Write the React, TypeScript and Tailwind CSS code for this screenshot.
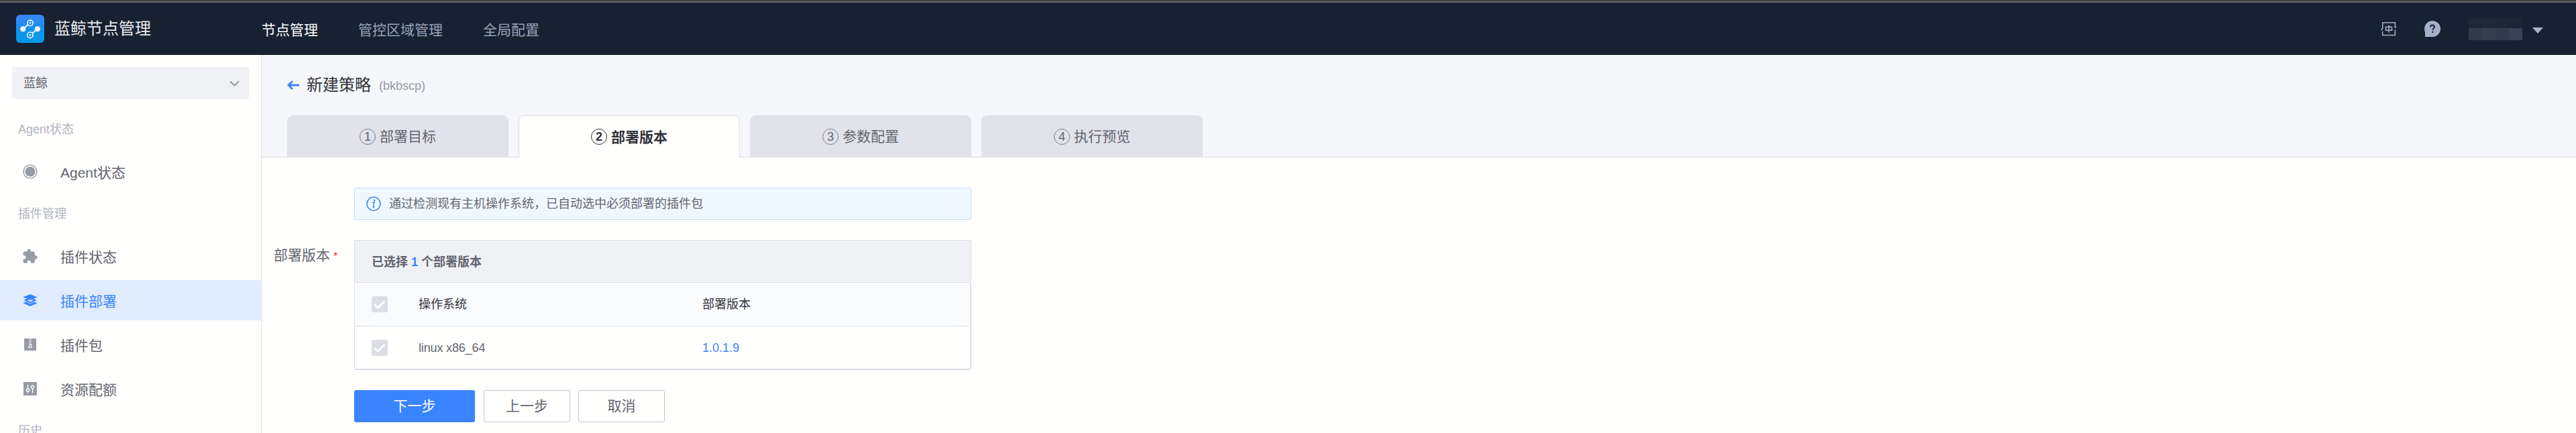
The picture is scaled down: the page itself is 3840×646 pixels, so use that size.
import type { ReactNode } from 'react';

const AgentIcon = () => (
  <svg width="22" height="22" viewBox="0 0 22 22" fill="none">
    <circle cx="11" cy="11" r="9.9" stroke="#979ba5" strokeWidth="1.4" />
    <circle cx="11" cy="11" r="7.6" fill="#979ba5" />
  </svg>
);

const PuzzleIcon = () => (
  <svg width="22" height="22" viewBox="0 0 22 22" fill="#979ba5">
    <path d="M19 10.2h-1.200V6.200a2 2 0 0 0-2-2h-4V3a2.600 2.600 0 0 0-5.200 0v1.200h-4a2 2 0 0 0-2 2V10h1.200a2.800 2.800 0 0 1 0 5.600H.6V19.600a2 2 0 0 0 2 2h3.800v-1.200a2.800 2.800 0 0 1 5.600 0v1.200h3.800a2 2 0 0 0 2-2v-4H19a2.700 2.700 0 0 0 0-5.400z" />
  </svg>
);

const LayersIcon = () => (
  <svg width="22" height="22" viewBox="0 0 22 22">
    <path d="M11 10.800L21.700 15.300 11 20 .3 15.300z" fill="#3a84ff" />
    <path d="M11 5.800L21.700 11 11 15.800.3 11z" fill="#3a84ff" stroke="#e1ecff" strokeWidth="0.8" />
    <path d="M11 9.600l4.500 1.500L11 13.200l-4.500-2.100z" fill="#e1ecff" />
    <path d="M11 2L21.700 6.300 11 10.800.3 6.300z" fill="#3a84ff" />
  </svg>
);

const PackageIcon = () => (
  <svg width="22" height="22" viewBox="0 0 22 22">
    <rect x="2" y="2" width="18" height="18" fill="#979ba5" />
    <path d="M11 3.200h2M9 5h2M11 6.800h2M9 8.600h2M11 10.400h2" stroke="#fff" strokeWidth="1.300" />
    <path d="M9.700 11.500h2.600l.7 4h-4z" fill="#979ba5" stroke="#fff" strokeWidth="1.200" />
  </svg>
);

const QuotaIcon = () => (
  <svg width="22" height="22" viewBox="0 0 22 22" fill="none" stroke="#fff" strokeWidth="1.400">
    <rect x="1" y="1" width="20" height="20" fill="#979ba5" stroke="none" />
    <path d="M7.500 5v6.200M7.500 15.200v2M14.500 5v1.500M14.500 10.500v6.700" />
    <circle cx="7.500" cy="13.100" r="2.100" />
    <circle cx="14.500" cy="8.500" r="2.100" />
  </svg>
);

const Logo = () => (
  <svg width="42" height="42" viewBox="0 0 42 42" fill="none">
    <defs>
      <linearGradient id="logo-bg" x1="0" y1="0" x2="0" y2="1">
        <stop offset="0" stopColor="#3a84f6" />
        <stop offset="0.7" stopColor="#0a97ec" />
        <stop offset="1" stopColor="#0499ea" />
      </linearGradient>
    </defs>
    <rect width="42" height="42" rx="6" fill="url(#logo-bg)" />
    <path d="M10.500 21.200L18 14.500M31.500 21.200L24 27.800" stroke="#f2f7ff" strokeWidth="2" />
    <circle cx="10.300" cy="21.300" r="4" fill="#f2f7ff" />
    <circle cx="31.900" cy="21.300" r="4" fill="#f2f7ff" />
    <circle cx="21" cy="12.300" r="4.200" stroke="#f2f7ff" strokeWidth="1.700" />
    <circle cx="21" cy="12.300" r="1.300" fill="#f2f7ff" />
    <circle cx="21" cy="30.200" r="4.200" stroke="#f2f7ff" strokeWidth="1.700" />
    <circle cx="21" cy="30.200" r="1.300" fill="#f2f7ff" />
  </svg>
);

const LanguageIcon = () => (
  <svg width="24" height="24" viewBox="0 0 24 24" fill="none" stroke="#a3b0c8" strokeWidth="1.500">
    <path d="M2.700 12.500V2.700h18.600v7.500M21.300 13v8.600H2.700v-6" />
    <path d="M.5 14l2.200-2.500M21.300 10.500l1.700-2" />
    <path d="M7.500 9.300h9v5h-9zM12 6.600v10.900" strokeWidth="1.600" />
  </svg>
);

const HelpIcon = () => (
  <svg width="24" height="24" viewBox="0 0 24 24" fill="none">
    <path d="M12 0a12 12 0 1 1 0 24H1v-7.200A12 12 0 0 1 12 0z" fill="#a3b0c8" />
    <path d="M9 9.200c0-1.700 1.300-2.700 3-2.700s3 1 3 2.600c0 2.100-2.700 2.100-2.700 4.700" stroke="#182132" strokeWidth="2" />
    <rect x="11.200" y="15.600" width="2.200" height="2.200" fill="#182132" />
  </svg>
);

const mosaic: string[] = [
  'bg-[#1d2736]', 'bg-[#1e2837]', 'bg-[#1c2635]', 'bg-[#1b2534]',
  'bg-[#303a49]', 'bg-[#343e4d]', 'bg-[#303a4a]', 'bg-[#394353]',
];

const Check = () => (
  <span className="flex size-6 items-center justify-center rounded-[3px] bg-[#dcdee5]">
    <svg width="24" height="24" viewBox="0 0 24 24" fill="none">
      <path d="M4.300 12.200l5 5L19.300 7.300" stroke="#fff" strokeWidth="2.800" />
    </svg>
  </span>
);

const Group = ({ label }: { label: string }) => (
  <div className="flex h-[66px] items-center pl-[27px] text-[18px] text-[#b0b3be]">{label}</div>
);

const Item = ({ icon, label, active = false }: { icon: ReactNode; label: string; active?: boolean }) => (
  <a
    className={`flex h-[60px] items-center gap-[34px] pl-[34px] text-[21px] ${
      active ? 'bg-[#e1ecff] text-[#3a84ff]' : 'text-[#63656e]'
    }`}
  >
    {icon}
    <span className="pt-0.5">{label}</span>
  </a>
);

const steps = ['部署目标', '部署版本', '参数配置', '执行预览'];

export default function App() {
  return (
    <div className="flex h-[646px] w-[3840px] flex-col overflow-hidden bg-[#fffffd] font-['Liberation_Sans','Noto_Sans_CJK_SC',sans-serif] leading-none text-[#63656e]">
      <div className="h-1 shrink-0 border-b-2 border-[#69696b] bg-[#414141]" />
      <header className="flex h-[78px] shrink-0 items-center bg-[#182132] pr-[49px] pl-6">
        <div className="flex w-[366px] items-center gap-[15px] text-[24px] text-[#eaebf0]">
          <Logo />
          <span>蓝鲸节点管理</span>
        </div>
        <nav className="flex gap-[60px] pt-[3px] text-[21px] text-[#96a2b9]">
          <a className="text-white">节点管理</a>
          <a>管控区域管理</a>
          <a>全局配置</a>
        </nav>
        <div className="ml-auto flex items-center">
          <LanguageIcon />
          <span className="ml-[41px]"><HelpIcon /></span>
          <div className="ml-[42px] grid grid-cols-4 grid-rows-[15px_18px]">
            {mosaic.map((tone, i) => (
              <span key={i} className={`w-5 ${tone}`} />
            ))}
          </div>
          <svg className="mt-1 ml-[15px]" width="16" height="9" viewBox="0 0 16 9">
            <path d="M0 0h16L8 9z" fill="#a8b4cb" />
          </svg>
        </div>
      </header>

      <div className="flex min-h-0 flex-1">
        <aside className="w-[390px] shrink-0 overflow-hidden border-r border-[#dcdee5] pt-[18px]">
          <div className="mr-[18px] mb-3 ml-[18px] flex h-12 items-center justify-between rounded-[3px] bg-[#f0f1f5] pr-[14px] pl-[17px] text-[18px]">
            <span>蓝鲸</span>
            <svg className="mt-0.5" width="15" height="10" viewBox="0 0 15 10" fill="none">
              <path d="M1 1.300l6.500 6.500L14 1.300" stroke="#979ba5" strokeWidth="2" />
            </svg>
          </div>
          <Group label="Agent状态" />
          <Item icon={<AgentIcon />} label="Agent状态" />
          <Group label="插件管理" />
          <div className="flex flex-col gap-1.5">
            <Item icon={<PuzzleIcon />} label="插件状态" />
            <Item icon={<LayersIcon />} label="插件部署" active />
            <Item icon={<PackageIcon />} label="插件包" />
            <Item icon={<QuotaIcon />} label="资源配额" />
          </div>
          <Group label="历史" />
        </aside>

        <main className="min-w-0 flex-1">
          <div className="h-[153px] border-b border-[#dcdee5] bg-[#f5f7fa] pl-[38px]">
            <div className="flex h-[90px] items-center">
              <svg width="18" height="14" viewBox="0 0 18 14" fill="none" stroke="#3a84ff" strokeWidth="2.800">
                <path d="M18 7H2M8 1L2 7l6 6" />
              </svg>
              <h1 className="ml-[11px] text-[24px] text-[#313238]">新建策略</h1>
              <span className="ml-3 pt-px text-[18px] text-[#979ba5]">(bkbscp)</span>
            </div>
            <ol className="flex gap-[15px]">
              {steps.map((step, i) => (
                <li
                  key={step}
                  className={`flex h-[63px] w-[330px] items-center justify-center gap-1.5 rounded-t-[9px] text-[21px] ${
                    i === 1
                      ? 'border border-b-0 border-[#dcdee5] bg-[#fffffd] font-bold text-[#313238]'
                      : 'bg-[#e1e2ea] text-[#63656e]'
                  }`}
                >
                  <span
                    className={`flex size-6 items-center justify-center rounded-full border text-[18px] ${
                      i === 1 ? 'border-[#313238]' : 'border-[#7c7f8a]'
                    }`}
                  >
                    {i + 1}
                  </span>
                  <span>{step}</span>
                </li>
              ))}
            </ol>
          </div>

          <div className="w-[1058px] pt-[45px]">
            <div className="ml-[138px] flex h-12 items-center rounded-[3px] border border-[#c5daff] bg-[#f0f8ff] pl-[17px] text-[18px]">
              <svg width="22" height="22" viewBox="0 0 22 22" fill="none" stroke="#3a84ff">
                <circle cx="11" cy="11" r="10" strokeWidth="1.500" />
                <path d="M9 9.300l3-.6-1.700 6.600c-.2 1 .8 1 2-.4" strokeWidth="1.500" />
                <circle cx="12.200" cy="5.900" r="1.300" fill="#3a84ff" stroke="none" />
              </svg>
              <span className="ml-[12px]">通过检测现有主机操作系统，已自动选中必须部署的插件包</span>
            </div>

            <div className="mt-[30px] flex">
              <div className="flex h-11 w-[138px] shrink-0 items-center gap-[5px] pl-[18px] text-[21px]">
                <span>部署版本</span>
                <span className="pt-1.5 text-[16px] text-[#ea3636]">*</span>
              </div>
              <div className="flex-1">
                <div className="flex h-[63px] items-center border border-b-0 border-[#dcdee5] bg-[#f0f1f5] pt-0.5 pl-[25px] text-[18px] font-bold">
                  <span>已选择 <span className="text-[#3a84ff]">1</span> 个部署版本</span>
                </div>
                <div className="h-[131px] rounded-[3px] border border-r-2 border-b-2 border-[#dcdee5] text-[18px]">
                  <div className="grid h-[65px] grid-cols-[70px_423px_1fr] items-center border-b border-[#dcdee5] bg-[#fafbfd] pl-[25px] text-[#313238]">
                    <Check />
                    <span>操作系统</span>
                    <span>部署版本</span>
                  </div>
                  <div className="grid h-[63px] grid-cols-[70px_423px_1fr] items-center pl-[25px]">
                    <Check />
                    <span className="tracking-[-0.15px]">linux x86_64</span>
                    <span className="text-[#3a84ff]">1.0.1.9</span>
                  </div>
                </div>
              </div>
            </div>

            <div className="mt-[30px] ml-[138px] flex text-[21px]">
              <button className="h-12 w-[180px] rounded-[3px] bg-[#3a84ff] pb-0.5 text-white">下一步</button>
              <button className="ml-[13px] h-12 w-[129px] rounded-[3px] border border-[#c4c6cc] pb-0.5">上一步</button>
              <button className="ml-3 h-12 w-[129px] rounded-[3px] border border-[#c4c6cc] pb-0.5">取消</button>
            </div>
          </div>
        </main>
      </div>
    </div>
  );
}
